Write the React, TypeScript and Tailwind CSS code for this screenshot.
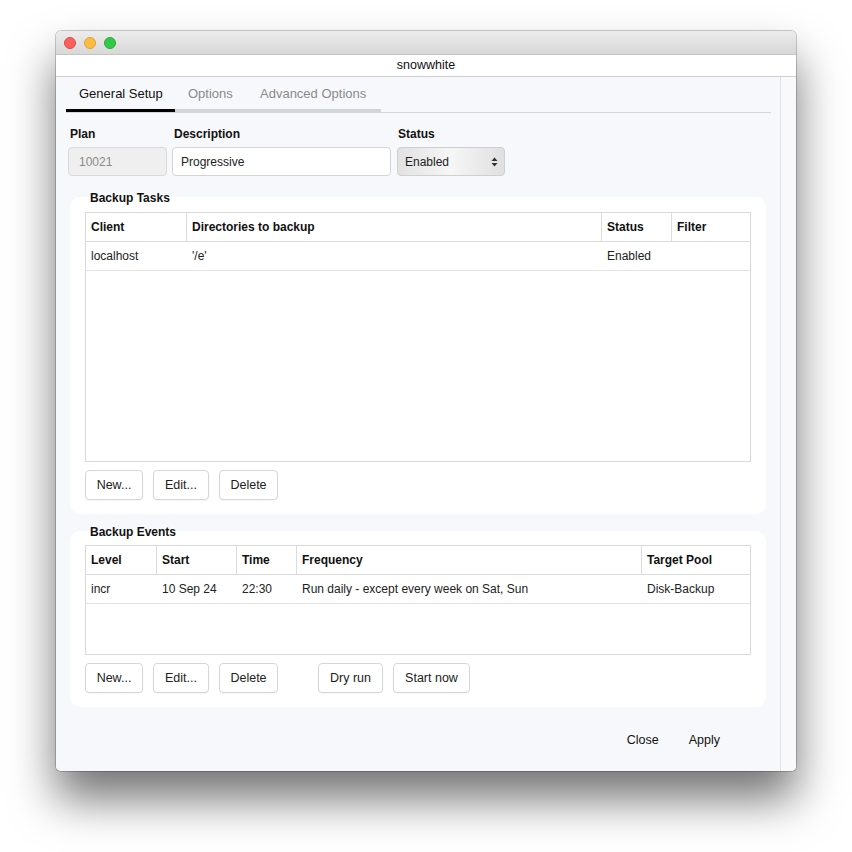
import React from 'react';

const font = { fontFamily: '"Liberation Sans", Arial, sans-serif' };

function Btn({ label, w }: { label: string; w: string }) {
  return (
    <button
      className={`h-[30px] ${w} rounded-[4px] border border-[#d6d6d6] bg-white text-[12.5px] text-[#222] shadow-[0_1px_1px_rgba(0,0,0,0.04)]`}
    >
      {label}
    </button>
  );
}

interface Col {
  title: string;
  w: string;
}

function Table({ cols, row, height }: { cols: Col[]; row: string[]; height: string }) {
  return (
    <div className={`${height} border border-[#d9d9d9] bg-white flex flex-col`}>
      <div className="flex h-[29px] border-b border-[#dcdcdc]">
        {cols.map((c, i) => (
          <div
            key={c.title}
            className={`${c.w} flex items-center px-[5px] text-[12px] font-bold text-[#111] ${
              i < cols.length - 1 ? 'border-r border-[#dcdcdc]' : ''
            }`}
          >
            {c.title}
          </div>
        ))}
      </div>
      <div className="flex h-[29px] border-b border-[#e3e3e3]">
        {cols.map((c, i) => (
          <div key={c.title} className={`${c.w} flex items-center px-[5px] text-[12px] text-[#222]`}>
            {row[i]}
          </div>
        ))}
      </div>
    </div>
  );
}

export default function App() {
  return (
    <div className="min-h-[852px] bg-white pt-[31px] pl-[56px]" style={font}>
      <div className="w-[740px] h-[740px] rounded-[5px] overflow-hidden flex flex-col shadow-[0_28px_46px_rgba(0,0,0,0.55),0_0_0_1px_rgba(0,0,0,0.2)]">
        {/* Title bar */}
        <div className="h-[24px] shrink-0 bg-gradient-to-b from-[#ececec] to-[#d8d8d8] border-b border-[#c4c4c4] flex items-center gap-[8px] pl-[8px]">
          <span className="w-[12px] h-[12px] rounded-full bg-[#fc605c] border border-[#de4a45]" />
          <span className="w-[12px] h-[12px] rounded-full bg-[#fdbc40] border border-[#dea236]" />
          <span className="w-[12px] h-[12px] rounded-full bg-[#34c84a] border border-[#27aa35]" />
        </div>
        <div className="h-[22px] shrink-0 bg-white border-b border-[#cfcfcf] flex items-center justify-center text-[12.5px] text-[#111]">
          snowwhite
        </div>

        <div className="flex-1 flex bg-[#f7f8fb]">
          <div className="w-[725px] border-r border-[#e2e2e2] flex flex-col pl-[10px] pr-[10px]">
            {/* Tabs */}
            <div className="pt-[8px] border-b border-[#d4d4d4] w-[705px]">
              <div className="flex text-[13px] leading-[14px]">
                <div className="w-[109px] h-[27px] pt-[2px] pl-[13px] border-b-[3px] border-black text-[#111]">
                  General Setup
                </div>
                <div className="w-[85px] h-[27px] pt-[2px] pl-[13px] border-b-[3px] border-[#d3d4d8] text-[#8a8a8a]">
                  Options
                </div>
                <div className="w-[121px] h-[27px] pt-[2px] border-b-[3px] border-[#d3d4d8] text-[#8a8a8a]">
                  Advanced Options
                </div>
              </div>
            </div>

            {/* Plan fields */}
            <div className="flex mt-[12px] pl-[2px] gap-[5px]">
              <div className="flex flex-col">
                <div className="h-[16px] pl-[2px] text-[12px] font-bold text-[#111]">Plan</div>
                <div className="mt-[6px] w-[99px] h-[29px] rounded-[4px] border border-[#dadada] bg-[#efefef] flex items-center pl-[10px] text-[12px] text-[#8a8a8a]">
                  10021
                </div>
              </div>
              <div className="flex flex-col">
                <div className="h-[16px] pl-[2px] text-[12px] font-bold text-[#111]">Description</div>
                <div className="mt-[6px] w-[219px] h-[29px] rounded-[4px] border border-[#d4d4d4] bg-white flex items-center pl-[8px] text-[12px] text-[#222]">
                  Progressive
                </div>
              </div>
              <div className="flex flex-col ml-[1px]">
                <div className="h-[16px] pl-[1px] text-[12px] font-bold text-[#111]">Status</div>
                <div className="mt-[6px] w-[108px] h-[29px] rounded-[4px] border border-[#cfcfcf] bg-gradient-to-r from-[#e2e2e2] via-[#f6f6f6] to-[#e0e0e0] flex items-center justify-between pl-[7px] pr-[6px] text-[12px] text-[#222]">
                  <span>Enabled</span>
                  <svg width="7" height="10" viewBox="0 0 7 10">
                    <path d="M3.5 0.5 L6.5 4 L0.5 4 Z" fill="#333" />
                    <path d="M3.5 9.5 L6.5 6 L0.5 6 Z" fill="#333" />
                  </svg>
                </div>
              </div>
            </div>

            {/* Backup Tasks */}
            <div className="mt-[21px] ml-[4px] w-[696px] h-[317px] rounded-[10px] bg-white relative px-[15px] pt-[15px]">
              <div className="absolute left-[20px] top-[-8px] text-[12px] font-bold text-[#111]">Backup Tasks</div>
              <Table
                height="h-[250px]"
                cols={[
                  { title: 'Client', w: 'w-[101px]' },
                  { title: 'Directories to backup', w: 'w-[415px]' },
                  { title: 'Status', w: 'w-[70px]' },
                  { title: 'Filter', w: 'flex-1' },
                ]}
                row={['localhost', "'/e'", 'Enabled', '']}
              />
              <div className="flex gap-[10px] mt-[8px]">
                <Btn label="New..." w="w-[58px]" />
                <Btn label="Edit..." w="w-[56px]" />
                <Btn label="Delete" w="w-[59px]" />
              </div>
            </div>

            {/* Backup Events */}
            <div className="mt-[17px] ml-[4px] w-[696px] h-[176px] rounded-[10px] bg-white relative px-[15px] pt-[14px]">
              <div className="absolute left-[20px] top-[-8px] text-[12px] font-bold text-[#111]">Backup Events</div>
              <Table
                height="h-[110px]"
                cols={[
                  { title: 'Level', w: 'w-[71px]' },
                  { title: 'Start', w: 'w-[80px]' },
                  { title: 'Time', w: 'w-[60px]' },
                  { title: 'Frequency', w: 'w-[345px]' },
                  { title: 'Target Pool', w: 'flex-1' },
                ]}
                row={['incr', '10 Sep 24', '22:30', 'Run daily - except every week on Sat, Sun', 'Disk-Backup']}
              />
              <div className="flex gap-[10px] mt-[8px]">
                <Btn label="New..." w="w-[58px]" />
                <Btn label="Edit..." w="w-[56px]" />
                <Btn label="Delete" w="w-[59px]" />
                <div className="w-[20px]" />
                <Btn label="Dry run" w="w-[65px]" />
                <Btn label="Start now" w="w-[77px]" />
              </div>
            </div>

            {/* Footer */}
            <div className="flex justify-end gap-[30px] mt-[24px] pr-[50px] text-[12.5px] text-[#111]">
              <span>Close</span>
              <span>Apply</span>
            </div>
          </div>
          <div className="flex-1 bg-[#f9f9fb]" />
        </div>
      </div>
    </div>
  );
}
